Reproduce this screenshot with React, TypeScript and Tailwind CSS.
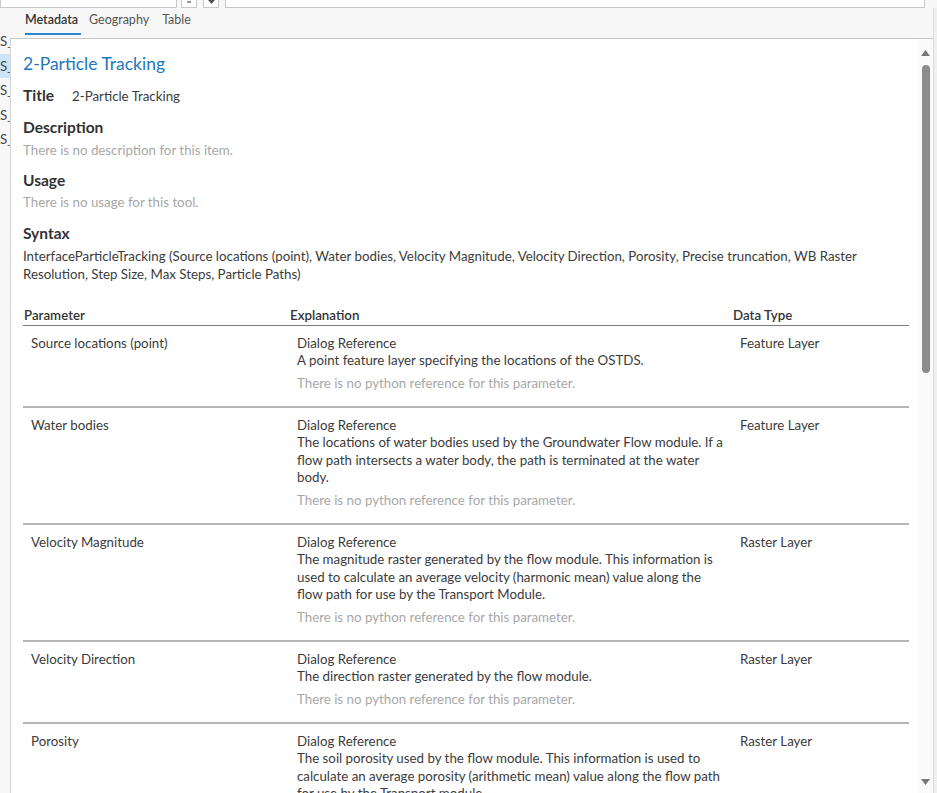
const rows = [
  {
    name: 'Source locations (point)',
    text: 'A point feature layer specifying the locations of the OSTDS.',
    type: 'Feature Layer',
  },
  {
    name: 'Water bodies',
    text: 'The locations of water bodies used by the Groundwater Flow module. If a flow path intersects a water body, the path is terminated at the water body.',
    type: 'Feature Layer',
  },
  {
    name: 'Velocity Magnitude',
    text: 'The magnitude raster generated by the flow module. This information is used to calculate an average velocity (harmonic mean) value along the flow path for use by the Transport Module.',
    type: 'Raster Layer',
  },
  {
    name: 'Velocity Direction',
    text: 'The direction raster generated by the flow module.',
    type: 'Raster Layer',
  },
  {
    name: 'Porosity',
    text: 'The soil porosity used by the flow module. This information is used to calculate an average porosity (arithmetic mean) value along the flow path for use by the Transport module.',
    type: 'Raster Layer',
  },
]

const sideItems = ['S_', 'S_', 'S_', 'S_', 'S_']

export default function App() {
  return (
    <div
      className="w-[937px] h-[793px] overflow-hidden flex flex-col bg-[#f7f7f7] text-[13.3px] text-[#3b3b3b]"
      style={{ fontFamily: 'Lato, "Segoe UI", sans-serif' }}
    >
      {/* cut-off search row */}
      <div className="h-[8px] shrink-0 overflow-hidden flex items-end gap-[4px] pr-[12px]">
        <div className="w-[177px] h-[20px] shrink-0 bg-white border border-[#c8c8c8]" />
        <div className="w-[16px] h-[20px] shrink-0 bg-white border border-[#c8c8c8] flex items-end justify-center pb-[4px]">
          <span className="w-[4px] h-[2px] bg-[#999]" />
        </div>
        <div className="w-[16px] h-[20px] shrink-0 bg-white border border-[#c8c8c8] ml-[2px] flex items-end justify-center pb-[3px]">
          <svg width="7" height="4" viewBox="0 0 7 4">
            <path d="M0 0 L7 0 L3.5 4 Z" fill="#555" />
          </svg>
        </div>
        <div className="flex-1 h-[20px] bg-white border border-[#c8c8c8] ml-[2px]" />
      </div>

      <div className="flex flex-1 min-h-0">
        {/* left list strip */}
        <div className="w-[10px] shrink-0 bg-[#f7f7f7] flex flex-col overflow-hidden pt-[21px]">
          {sideItems.map((s, i) => (
            <div
              key={i}
              className={
                'h-[24.5px] leading-[24px] text-[#444] whitespace-nowrap ' +
                (i === 1 ? 'bg-[#cce4f7]' : '')
              }
            >
              {s}
            </div>
          ))}
        </div>

        <div className="flex-1 flex flex-col min-w-0">
          {/* tabs */}
          <div className="h-[31px] shrink-0 flex items-start pl-[15px] pt-[3px] border-b border-[#c4c4c4] text-[12.5px]">
            <div className="flex flex-col w-[56px]">
              <span className="font-semibold text-[#333]">Metadata</span>
              <span className="h-[2px] bg-[#2b86d0] mt-[3px]" />
            </div>
            <span className="text-[#555] ml-[8px]">Geography</span>
            <span className="text-[#555] ml-[13px]">Table</span>
          </div>

          <div className="flex flex-1 min-h-0">
            {/* document */}
            <div className="flex-1 bg-white border-l border-[#d6d6d6] pl-[12px] pr-[9px] pt-[12px] overflow-hidden">
              <h1 className="text-[17.5px] leading-[26px] text-[#2377bd]">2-Particle Tracking</h1>

              <div className="flex items-baseline gap-[18px] mt-[8px]">
                <span className="text-[15.5px] leading-[20px] font-bold text-[#333]">Title</span>
                <span className="leading-[20px]">2-Particle Tracking</span>
              </div>

              <h2 className="text-[15.5px] leading-[20px] font-bold text-[#333] mt-[11px]">Description</h2>
              <p className="leading-[17.5px] text-[#a8a8a8] mt-[5px]">There is no description for this item.</p>

              <h2 className="text-[15.5px] leading-[20px] font-bold text-[#333] mt-[10px]">Usage</h2>
              <p className="leading-[17.5px] text-[#a8a8a8] mt-[4px]">There is no usage for this tool.</p>

              <h2 className="text-[15.5px] leading-[20px] font-bold text-[#333] mt-[12px]">Syntax</h2>
              <p className="leading-[17.5px] mt-[5px]">
                InterfaceParticleTracking (Source locations (point), Water bodies, Velocity Magnitude, Velocity
                Direction, Porosity, Precise truncation, WB Raster Resolution, Step Size, Max Steps, Particle Paths)
              </p>

              <div className="mt-[24px]">
                <div className="grid grid-cols-[267px_443px_1fr] border-b border-[#7a7a7a]">
                  <span className="font-semibold text-[#333] pl-[1px] leading-[17.5px]">Parameter</span>
                  <span className="font-semibold text-[#333] leading-[17.5px]">Explanation</span>
                  <span className="font-semibold text-[#333] leading-[17.5px]">Data Type</span>
                </div>
                {rows.map((r) => (
                  <div
                    key={r.name}
                    className="grid grid-cols-[267px_443px_1fr] border-b-2 border-[#b5b5b5] pt-[9px] pb-[13.5px] leading-[17.5px]"
                  >
                    <span className="pl-[8px]">{r.name}</span>
                    <div className="pl-[7px] pr-[10px]">
                      <div>Dialog Reference</div>
                      <div>{r.text}</div>
                      <div className="text-[#a8a8a8] mt-[5px]">There is no python reference for this parameter.</div>
                    </div>
                    <span className="pl-[7px]">{r.type}</span>
                  </div>
                ))}
              </div>
            </div>

            {/* scrollbar */}
            <div className="w-[15px] shrink-0 bg-[#fafafa] flex flex-col items-center pt-[11px] pb-[8px]">
              <svg width="9" height="6" viewBox="0 0 9 6">
                <path d="M4.5 0 L9 6 L0 6 Z" fill="#777" />
              </svg>
              <div className="w-[8px] h-[308px] rounded-full bg-[#8c8c8c] mt-[9px]" />
              <div className="flex-1" />
              <svg width="9" height="6" viewBox="0 0 9 6">
                <path d="M0 0 L9 0 L4.5 6 Z" fill="#777" />
              </svg>
            </div>
          </div>
        </div>
        <div className="w-[4px] shrink-0 bg-[#f0f0f0] border-l border-[#dcdcdc]" />
      </div>
    </div>
  )
}
